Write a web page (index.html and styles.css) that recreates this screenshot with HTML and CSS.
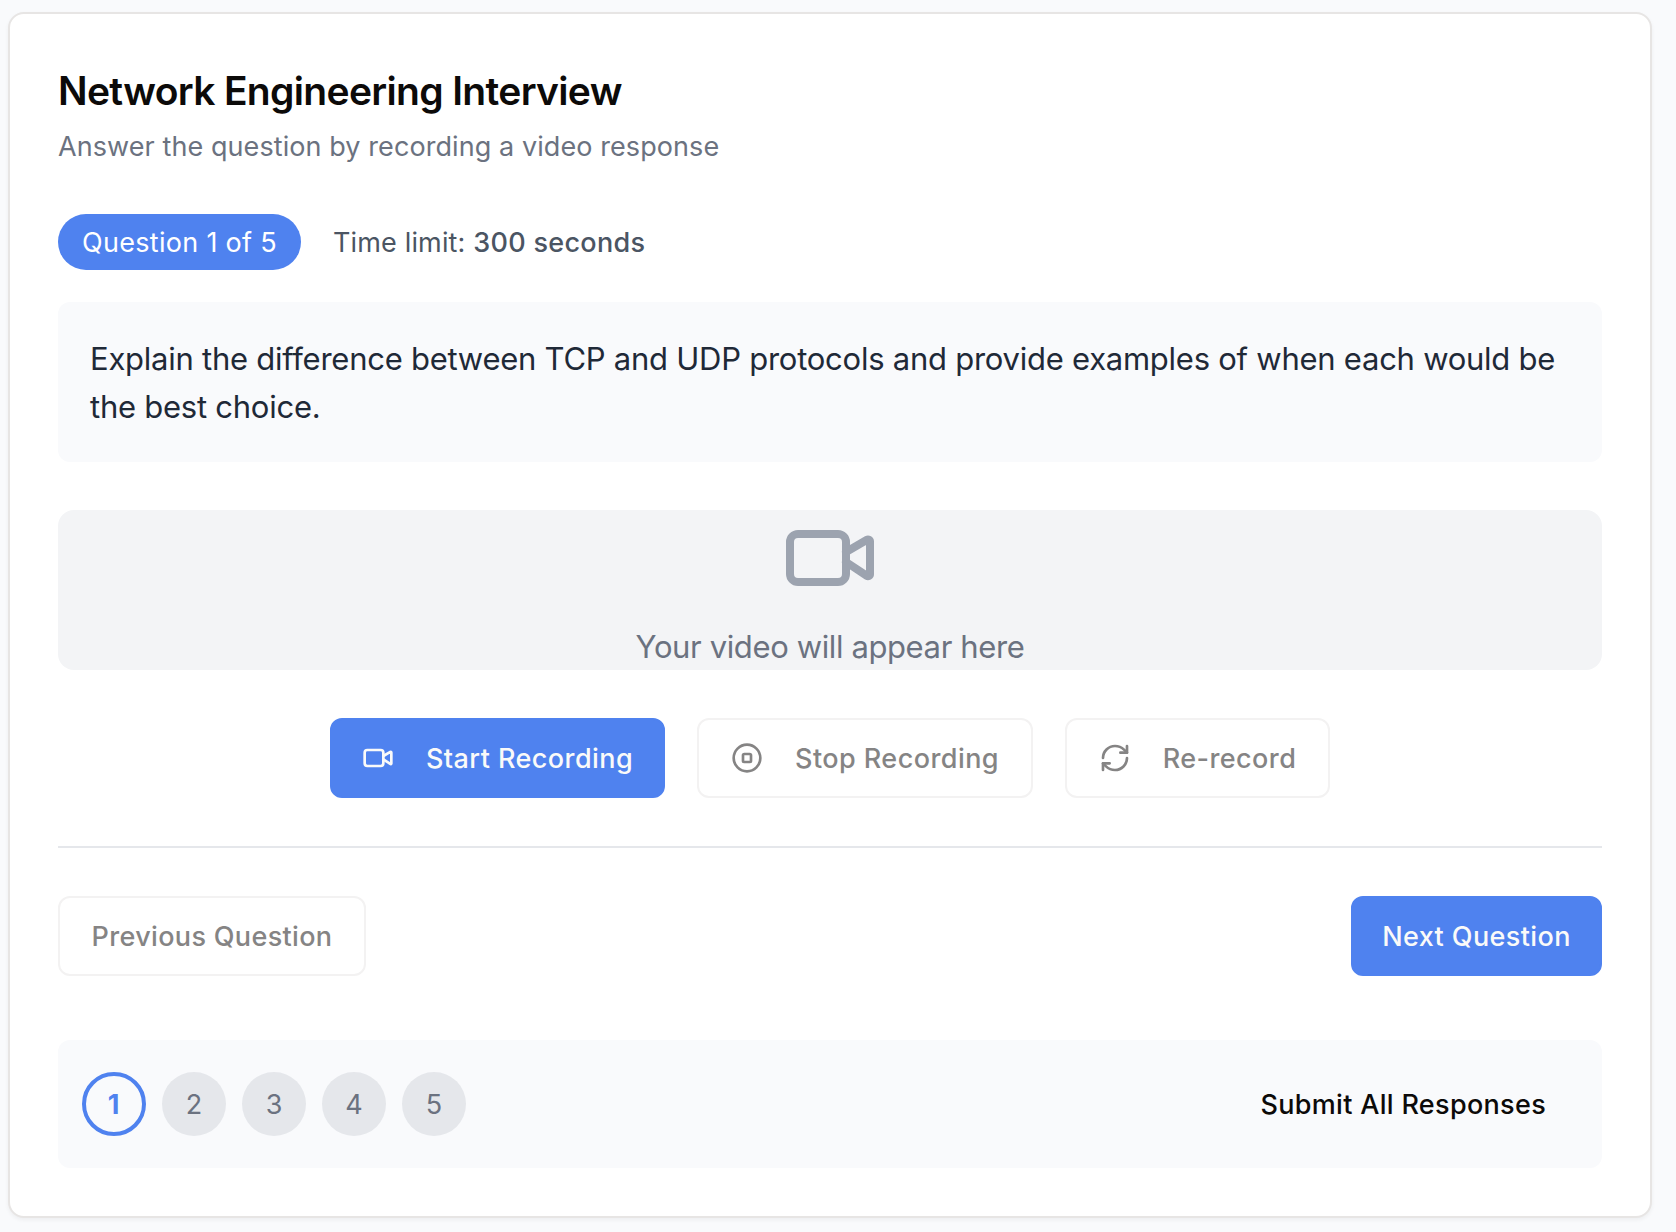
FILE: index.html
```html
<!DOCTYPE html>
<html lang="en">
<head>
<meta charset="utf-8">
<title>Network Engineering Interview</title>
<link rel="stylesheet" href="styles.css">
</head>
<body>
<main class="card">
  <header class="header">
    <h1 class="title">Network Engineering Interview</h1>
    <p class="subtitle">Answer the question by recording a video response</p>
  </header>

  <div class="meta">
    <span class="badge">Question 1 of 5</span>
    <span class="limit">Time limit: <strong class="limit-value">300 seconds</strong></span>
  </div>

  <section class="question">Explain the difference between TCP and UDP protocols and provide examples of when each would be<br>the best choice.</section>

  <section class="video">
    <svg class="video-icon" viewBox="0 0 24 24"><path d="m16 13 5.223 3.482a.5.5 0 0 0 .777-.416V7.87a.5.5 0 0 0-.752-.432L16 10.5"/><rect x="2" y="6" width="14" height="12" rx="2"/></svg>
    <p class="video-text">Your video will appear here</p>
  </section>

  <div class="controls">
    <button class="btn btn-primary btn-start">
      <svg class="icon" viewBox="0 0 24 24"><path d="m16 13 5.223 3.482a.5.5 0 0 0 .777-.416V7.87a.5.5 0 0 0-.752-.432L16 10.5"/><rect x="2" y="6" width="14" height="12" rx="2"/></svg>
      <span class="label">Start Recording</span>
    </button>
    <button class="btn btn-outline btn-stop" disabled>
      <svg class="icon" viewBox="0 0 24 24"><circle cx="12" cy="12" r="10"/><rect x="9" y="9" width="6" height="6" rx="1"/></svg>
      <span class="label">Stop Recording</span>
    </button>
    <button class="btn btn-outline btn-redo" disabled>
      <svg class="icon" viewBox="0 0 24 24"><path d="M3 12a9 9 0 0 1 9-9 9.75 9.75 0 0 1 6.74 2.74L21 8"/><path d="M21 3v5h-5"/><path d="M21 12a9 9 0 0 1-9 9 9.75 9.75 0 0 1-6.74-2.74L3 16"/><path d="M8 16H3v5"/></svg>
      <span class="label">Re-record</span>
    </button>
  </div>

  <nav class="pager">
    <button class="btn btn-outline btn-prev" disabled><span class="label">Previous Question</span></button>
    <button class="btn btn-primary btn-next"><span class="label">Next Question</span></button>
  </nav>

  <footer class="footer">
    <ol class="steps">
      <li class="step step-current">1</li>
      <li class="step">2</li>
      <li class="step">3</li>
      <li class="step">4</li>
      <li class="step">5</li>
    </ol>
    <button class="btn btn-ghost"><span class="label">Submit All Responses</span></button>
  </footer>
</main>
</body>
</html>
```

FILE: styles.css
```css
*, *::before, *::after { box-sizing: border-box; }

body {
  margin: 0;
  padding: 12px 24px 14px 8px;
  background: #f9fafc;
  color: #0c0a09;
  font-family: Inter, "Liberation Sans", sans-serif;
  font-size: 27px;
  line-height: 40px;
}

h1, p, ol { margin: 0; padding: 0; }

.card {
  height: 1206px;
  padding: 48px;
  background: #fff;
  border: 2px solid #e7e5e4;
  border-radius: 16px;
  box-shadow: 0 2px 4px rgba(0, 0, 0, .05);
}

.header { display: flex; flex-direction: column; gap: 8px; }
.title { height: 56px; font-size: 39px; line-height: 58px; font-weight: 600; letter-spacing: -.66px; }
.subtitle { height: 40px; line-height: 42px; color: #6b7280; letter-spacing: .08px; }

.meta { display: flex; align-items: center; gap: 32px; margin-top: 48px; }
.badge {
  width: 243px;
  padding: 9px 24px 7px;
  border-radius: 28px;
  background: #4f82ef;
  color: #fff;
  letter-spacing: .3px;
  white-space: nowrap;
}
.limit { padding-top: 2px; color: #4b5563; letter-spacing: .15px; }
.limit-value { font-weight: 500; letter-spacing: .3px; }

.question {
  margin-top: 32px;
  padding: 33px 32px 31px;
  border-radius: 12px;
  background: #f9fafc;
  color: #1f2937;
  font-size: 31px;
  line-height: 48px;
  letter-spacing: -.25px;
  white-space: nowrap;
}

.video {
  display: flex;
  flex-direction: column;
  align-items: center;
  gap: 16px;
  margin-top: 48px;
  border-radius: 16px;
  background: #f3f4f6;
}
.video-icon { width: 96px; height: 96px; color: #9ca3af; }
.video-text { height: 48px; color: #6b7280; font-size: 31px; line-height: 50px; letter-spacing: -.38px; }

svg {
  display: block;
  flex: none;
  fill: none;
  stroke: currentColor;
  stroke-width: 2;
  stroke-linecap: round;
  stroke-linejoin: round;
}
.icon { width: 32px; height: 32px; }

.controls { display: flex; justify-content: center; gap: 32px; margin-top: 48px; }

.btn {
  display: flex;
  align-items: center;
  justify-content: center;
  gap: 32px;
  height: 80px;
  padding: 0 30px;
  border: 2px solid transparent;
  border-radius: 12px;
  background: transparent;
  color: #0c0a09;
  font: inherit;
  font-weight: 500;
  letter-spacing: .44px;
  white-space: nowrap;
}
.label { padding-top: 2px; }
.btn-primary { border-color: #4f82ef; background: #4f82ef; color: #fafaf9; }
.btn-outline { border-color: #f3f2f2; background: #fff; color: #858484; }
.btn-start { width: 335px; }
.btn-stop { width: 336px; }
.btn-redo { width: 265px; }

.pager {
  display: flex;
  justify-content: space-between;
  margin-top: 48px;
  padding-top: 48px;
  border-top: 2px solid #e5e7eb;
}
.btn-prev { width: 308px; letter-spacing: .33px; }
.btn-next { width: 251px; letter-spacing: .4px; }

.footer {
  display: flex;
  align-items: center;
  justify-content: space-between;
  height: 128px;
  margin-top: 64px;
  padding: 0 24px;
  border-radius: 12px;
  background: #f9fafc;
}
.steps { display: flex; gap: 16px; list-style: none; }
.step {
  display: flex;
  align-items: center;
  justify-content: center;
  width: 64px;
  height: 64px;
  padding-top: 2px;
  border-radius: 50%;
  background: #e5e7eb;
  color: #6b7280;
}
.step-current {
  padding-right: 1px;
  border: 4px solid #4f82ef;
  background: transparent;
  color: #4f82ef;
  font-weight: 700;
}
.btn-ghost { letter-spacing: .32px; }
```
